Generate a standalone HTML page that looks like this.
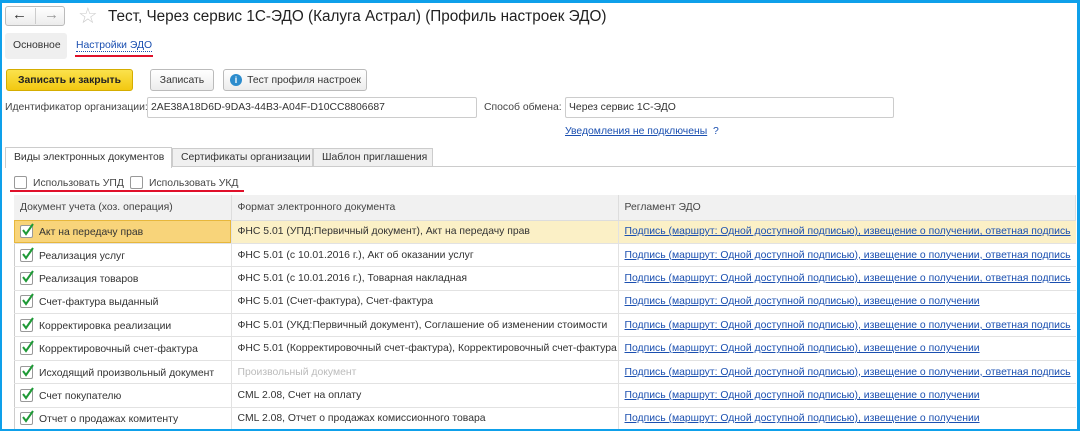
<!DOCTYPE html>
<html><head><meta charset="utf-8"><style>
*{box-sizing:border-box;margin:0;padding:0}
body{width:1080px;height:432px;overflow:hidden;background:#fff;font-family:"Liberation Sans",sans-serif;font-size:10.4px;color:#333;position:relative}
.frame{position:absolute;left:0;top:0;width:1080px;height:431px;border:2px solid #0ea0ea;border-right-width:3px;border-top-width:3px}
.a{position:absolute;white-space:nowrap}
.btn{position:absolute;border:1px solid #bbb;border-radius:3px;background:linear-gradient(#fff,#ececec);height:22px;line-height:20px;text-align:center;color:#333}
.inp{position:absolute;border:1px solid #ccc;border-radius:2px;height:21px;line-height:19px;padding-left:3px;color:#333;background:#fff}
.link{color:#1a4fb0;text-decoration:underline}
table{position:absolute;left:14px;top:195px;width:1062px;border-collapse:collapse;table-layout:fixed}
td{height:23.4px;border-bottom:1px solid #e2e2e2;padding-left:6px;white-space:nowrap;overflow:hidden;vertical-align:middle}
th{height:25px;background:#f1f1f1;font-weight:normal;text-align:left;padding-left:6px;border-right:1px solid #ddd;border-bottom:1px solid #ddd;color:#444}
td.c1{border-right:1px solid #e2e2e2}
td.c2{border-right:1px solid #e2e2e2}
.cb{display:inline-block;width:13px;height:13px;border:1px solid #999;border-radius:2px;background:#fff;vertical-align:-3px;margin-right:6px;position:relative}
.cb svg{position:absolute;left:0;top:-3px}
tr.sel td{background:#fbf0c6}
tr.sel td.c1{background:#f8d47a;outline:1px solid #e7b73b;outline-offset:-1px}
</style></head><body>
<div class="btn" style="left:5px;top:6px;width:60px;height:20px;"></div>
<div class="a" style="left:12px;top:6px;font-size:15px;color:#333;">&#8592;</div>
<div class="a" style="left:44px;top:6px;font-size:15px;color:#999;">&#8594;</div>
<div style="position:absolute;left:35px;top:8px;width:1px;height:16px;background:#ccc"></div>
<div class="a" style="left:78px;top:3px;font-size:22px;color:#ccc;">&#9734;</div>
<div class="a" style="left:108px;top:8px;font-size:15.3px;color:#222;">Тест, Через сервис 1С-ЭДО (Калуга Астрал) (Профиль настроек ЭДО)</div>
<div style="position:absolute;left:5px;top:33px;width:62px;height:26px;background:#efefef;border-radius:3px"></div>
<div class="a" style="left:13px;top:40px;color:#333">Основное</div>
<div class="a" style="left:76px;top:40px;color:#1a4fb0;border-bottom:1px dotted #1a4fb0">Настройки ЭДО</div>
<div style="position:absolute;left:75px;top:55px;width:78px;height:2px;background:#e0102a"></div>
<div class="btn" style="left:6px;top:69px;width:127px;line-height:21px;background:linear-gradient(#fbe24c,#f2c811);border-color:#d5ad00;font-weight:bold;color:#222">Записать и закрыть</div>
<div class="btn" style="left:150px;top:69px;width:64px;line-height:21px">Записать</div>
<div class="btn" style="left:223px;top:69px;width:144px;padding-left:18px;line-height:21px">Тест профиля настроек</div>
<div style="position:absolute;left:230px;top:74px;width:12px;height:12px;border-radius:50%;background:#2c8ccd;color:#fff;font-size:9px;font-weight:bold;text-align:center;line-height:12px">i</div>
<div class="a" style="left:5px;top:102px;color:#444">Идентификатор организации:</div>
<div class="inp" style="left:147px;top:97px;width:330px">2AE38A18D6D-9DA3-44B3-A04F-D10CC8806687</div>
<div class="a" style="left:484px;top:102px;color:#444">Способ обмена:</div>
<div class="inp" style="left:565px;top:97px;width:329px">Через сервис 1С-ЭДО</div>
<div class="a link" style="left:565px;top:126px">Уведомления не подключены</div>
<div class="a" style="left:713px;top:126px;color:#1a4fb0">?</div>
<div style="position:absolute;left:5px;top:166px;width:1071px;height:1px;background:#ccc"></div>
<div class="a" style="left:5px;top:147px;width:167px;border:1px solid #ccc;border-bottom:none;background:#fff;padding:4px 0 0 8px;height:21px">Виды электронных документов</div>
<div class="a" style="left:172px;top:148px;width:141px;height:19px;border:1px solid #ccc;background:#f0f0f0;padding:3px 0 0 8px">Сертификаты организации</div>
<div class="a" style="left:313px;top:148px;width:120px;height:19px;border:1px solid #ccc;background:#f0f0f0;padding:3px 0 0 8px">Шаблон приглашения</div>
<div class="a" style="left:14px;top:176px;color:#444"><span class="cb"></span>Использовать УПД</div>
<div class="a" style="left:130px;top:176px;color:#444"><span class="cb"></span>Использовать УКД</div>
<div style="position:absolute;left:10px;top:190px;width:234px;height:2px;background:#e0102a"></div>
<div style="position:absolute;left:14px;top:195px;width:1px;height:235px;background:#ccc"></div>
<table>
<colgroup><col style="width:217px"><col style="width:387px"><col></colgroup>
<tr><th>Документ учета (хоз. операция)</th><th>Формат электронного документа</th><th>Регламент ЭДО</th></tr>
<tr class="sel"><td class="c1"><span class="cb"><svg width="14" height="14"><path d="M2 7l3 4 7-10" stroke="#1e9a36" stroke-width="2" fill="none"/></svg></span>Акт на передачу прав</td><td class="c2">ФНС 5.01 (УПД:Первичный документ), Акт на передачу прав</td><td><span class="link">Подпись (маршрут: Одной доступной подписью), извещение о получении, ответная подпись</span></td></tr>
<tr><td class="c1"><span class="cb"><svg width="14" height="14"><path d="M2 7l3 4 7-10" stroke="#1e9a36" stroke-width="2" fill="none"/></svg></span>Реализация услуг</td><td class="c2">ФНС 5.01 (с 10.01.2016 г.), Акт об оказании услуг</td><td><span class="link">Подпись (маршрут: Одной доступной подписью), извещение о получении, ответная подпись</span></td></tr>
<tr><td class="c1"><span class="cb"><svg width="14" height="14"><path d="M2 7l3 4 7-10" stroke="#1e9a36" stroke-width="2" fill="none"/></svg></span>Реализация товаров</td><td class="c2">ФНС 5.01 (с 10.01.2016 г.), Товарная накладная</td><td><span class="link">Подпись (маршрут: Одной доступной подписью), извещение о получении, ответная подпись</span></td></tr>
<tr><td class="c1"><span class="cb"><svg width="14" height="14"><path d="M2 7l3 4 7-10" stroke="#1e9a36" stroke-width="2" fill="none"/></svg></span>Счет-фактура выданный</td><td class="c2">ФНС 5.01 (Счет-фактура), Счет-фактура</td><td><span class="link">Подпись (маршрут: Одной доступной подписью), извещение о получении</span></td></tr>
<tr><td class="c1"><span class="cb"><svg width="14" height="14"><path d="M2 7l3 4 7-10" stroke="#1e9a36" stroke-width="2" fill="none"/></svg></span>Корректировка реализации</td><td class="c2">ФНС 5.01 (УКД:Первичный документ), Соглашение об изменении стоимости</td><td><span class="link">Подпись (маршрут: Одной доступной подписью), извещение о получении, ответная подпись</span></td></tr>
<tr><td class="c1"><span class="cb"><svg width="14" height="14"><path d="M2 7l3 4 7-10" stroke="#1e9a36" stroke-width="2" fill="none"/></svg></span>Корректировочный счет-фактура</td><td class="c2">ФНС 5.01 (Корректировочный счет-фактура), Корректировочный счет-фактура</td><td><span class="link">Подпись (маршрут: Одной доступной подписью), извещение о получении</span></td></tr>
<tr><td class="c1"><span class="cb"><svg width="14" height="14"><path d="M2 7l3 4 7-10" stroke="#1e9a36" stroke-width="2" fill="none"/></svg></span>Исходящий произвольный документ</td><td class="c2" style="color:#bbb">Произвольный документ</td><td><span class="link">Подпись (маршрут: Одной доступной подписью), извещение о получении, ответная подпись</span></td></tr>
<tr><td class="c1"><span class="cb"><svg width="14" height="14"><path d="M2 7l3 4 7-10" stroke="#1e9a36" stroke-width="2" fill="none"/></svg></span>Счет покупателю</td><td class="c2">CML 2.08, Счет на оплату</td><td><span class="link">Подпись (маршрут: Одной доступной подписью), извещение о получении</span></td></tr>
<tr><td class="c1"><span class="cb"><svg width="14" height="14"><path d="M2 7l3 4 7-10" stroke="#1e9a36" stroke-width="2" fill="none"/></svg></span>Отчет о продажах комитенту</td><td class="c2">CML 2.08, Отчет о продажах комиссионного товара</td><td><span class="link">Подпись (маршрут: Одной доступной подписью), извещение о получении</span></td></tr>
</table>
<div class="frame"></div>
</body></html>
